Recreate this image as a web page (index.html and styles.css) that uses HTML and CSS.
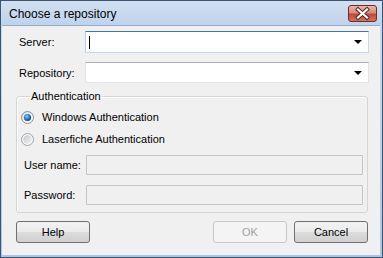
FILE: index.html
```html
<!DOCTYPE html>
<html lang="en">
<head>
  <meta charset="UTF-8" />
  <title>Choose a repository</title>
  <link rel="stylesheet" href="styles.css">
</head>
<body>
  <div class="window">
    <div class="titlebar">
      <span class="title">Choose a repository</span>
      <div class="close">
        <svg width="29" height="17" viewBox="0 0 29 17">
          <path d="M10 4.5 L19 12.5 M19 4.5 L10 12.5" stroke="#5a2a24" stroke-width="4.2" stroke-linecap="square"/>
          <path d="M10 4.5 L19 12.5 M19 4.5 L10 12.5" stroke="#ffffff" stroke-width="2.2" stroke-linecap="square"/>
        </svg>
      </div>
    </div>

    <div class="client">
      <div class="row first">
        <label class="lbl">Server:</label>
        <div class="combo focus">
          <span class="caret"></span>
          <span class="arrow"></span>
        </div>
      </div>
      <div class="row">
        <label class="lbl">Repository:</label>
        <div class="combo">
          <span></span>
          <span class="arrow"></span>
        </div>
      </div>

      <fieldset class="group">
        <legend>Authentication</legend>
        <div class="radio-row">
          <svg class="radio" width="13" height="13" viewBox="0 0 13 13">
            <defs>
              <linearGradient id="ring" x1="0" y1="0" x2="1" y2="1">
                <stop offset="0" stop-color="#d9dcdf"/>
                <stop offset="1" stop-color="#ffffff"/>
              </linearGradient>
              <radialGradient id="dot" cx="0.4" cy="0.35" r="0.7">
                <stop offset="0" stop-color="#8fd0ff"/>
                <stop offset="0.5" stop-color="#2b7fcc"/>
                <stop offset="1" stop-color="#0a3d73"/>
              </radialGradient>
            </defs>
            <circle cx="6.5" cy="6.5" r="6" fill="url(#ring)" stroke="#8f9296"/>
            <circle cx="6.5" cy="6.5" r="3.6" fill="url(#dot)"/>
          </svg>
          <span>Windows Authentication</span>
        </div>
        <div class="radio-row">
          <svg class="radio" width="13" height="13" viewBox="0 0 13 13">
            <defs>
              <linearGradient id="empty" x1="0" y1="0" x2="1" y2="1">
                <stop offset="0" stop-color="#c4c7cc"/>
                <stop offset="1" stop-color="#f6f6f6"/>
              </linearGradient>
            </defs>
            <circle cx="6.5" cy="6.5" r="6" fill="#f4f4f4" stroke="#a3a6aa"/>
            <circle cx="6.5" cy="6.5" r="4.3" fill="url(#empty)"/>
          </svg>
          <span>Laserfiche Authentication</span>
        </div>
        <div class="field-row">
          <label class="sub-lbl">User name:</label>
          <div class="textbox disabled"></div>
        </div>
        <div class="field-row">
          <label class="sub-lbl">Password:</label>
          <div class="textbox disabled"></div>
        </div>
      </fieldset>

      <div class="buttons">
        <button class="btn">Help</button>
        <span class="spacer"></span>
        <button class="btn" disabled>OK</button>
        <button class="btn">Cancel</button>
      </div>
    </div>
  </div>
</body>
</html>
```

FILE: styles.css
```css
body {
  margin: 0;
  font-family: 'Liberation Sans', Arial, sans-serif;
  font-size: 11px;
  color: #000;
  background: #fff;
}
.window {
  width: 383px;
  height: 258px;
  box-sizing: border-box;
  border: 1px solid #3b5472;
  background: linear-gradient(to bottom, #cddcee, #a9c6e8);
  padding: 0 2px 2px 1px;
  display: flex;
  flex-direction: column;
}
.titlebar {
  height: 24px;
  display: flex;
  align-items: center;
  justify-content: space-between;
  background: linear-gradient(to bottom, #d2e0f1, #bed3ec);
  margin: 0 -2px 0 -1px;
  padding: 0 5px 0 8px;
}
.title {
  font-size: 12px;
  color: #000;
  padding-top: 1px;
}
.close {
  width: 29px;
  height: 17px;
  box-sizing: border-box;
  border: 1px solid #6e2c26;
  border-radius: 3px;
  background: linear-gradient(to bottom, #e8b5ac 0%, #d88a7e 45%, #c2473a 55%, #d2735e 100%);
  display: flex;
  margin-top: 1px;
}
.close svg {
  margin: -1px;
}
.client {
  flex: 1;
  background: #f0f0f0;
  border-top: 1px solid #93aecd;
  padding: 5px 0 0 14px;
}
.row {
  display: flex;
  align-items: center;
  margin-top: 9px;
}
.row.first {
  margin-top: 0;
}
.lbl {
  width: 69px;
  padding-left: 3px;
  box-sizing: border-box;
  flex: none;
}
.combo {
  width: 284px;
  height: 21px;
  box-sizing: border-box;
  background: #fff;
  border: 1px solid #e2e3ea;
  border-top-color: #abadb3;
  display: flex;
  align-items: center;
  justify-content: space-between;
  padding: 0 6px 0 3px;
}
.combo.focus {
  height: 22px;
  border-color: #c5daed;
  border-top-color: #3d7bad;
  border-left-color: #b5cfe7;
}
.caret {
  width: 1px;
  height: 13px;
  background: #000;
}
.arrow {
  width: 0;
  height: 0;
  border-left: 4px solid transparent;
  border-right: 4px solid transparent;
  border-top: 4px solid #000;
}
.group {
  width: 352px;
  box-sizing: border-box;
  margin: 7px 0 0;
  padding: 3px 3px 7px 7px;
  border: 1px solid #d5d5d5;
  border-radius: 3px;
  box-shadow: inset 1px 1px 0 #fff;
  min-width: 0;
}
.group legend {
  padding: 0 1px;
  margin-left: 6px;
  line-height: 13px;
}
.radio-row {
  display: flex;
  align-items: center;
  height: 22px;
}
.radio {
  margin: 0 8px 0 -3px;
  flex: none;
}
.field-row {
  display: flex;
  align-items: center;
  margin-top: 5px;
}
.field-row + .field-row {
  margin-top: 10px;
}
.sub-lbl {
  width: 62px;
  flex: none;
}
.textbox {
  width: 277px;
  height: 20px;
  box-sizing: border-box;
  border: 1px solid #c8c8c8;
  border-radius: 1px;
}
.textbox.disabled {
  background: #f0f0f0;
  border-color: #c5c5c5;
}
.buttons {
  display: flex;
  margin-top: 8px;
  width: 352px;
}
.spacer {
  flex: 1;
}
.btn {
  width: 74px;
  height: 22px;
  margin-left: 7px;
  font-family: 'Liberation Sans', Arial, sans-serif;
  font-size: 11px;
  color: #000;
  border: 1px solid #707070;
  border-radius: 3px;
  background: linear-gradient(to bottom, #f2f2f2 0%, #ebebeb 50%, #dddddd 50%, #cfcfcf 100%);
  padding: 0;
}
.btn:first-child {
  margin-left: 0;
}
.btn:disabled {
  color: #a0a0a0;
  border-color: #c5c7c9;
  background: #f4f4f4;
}
```
